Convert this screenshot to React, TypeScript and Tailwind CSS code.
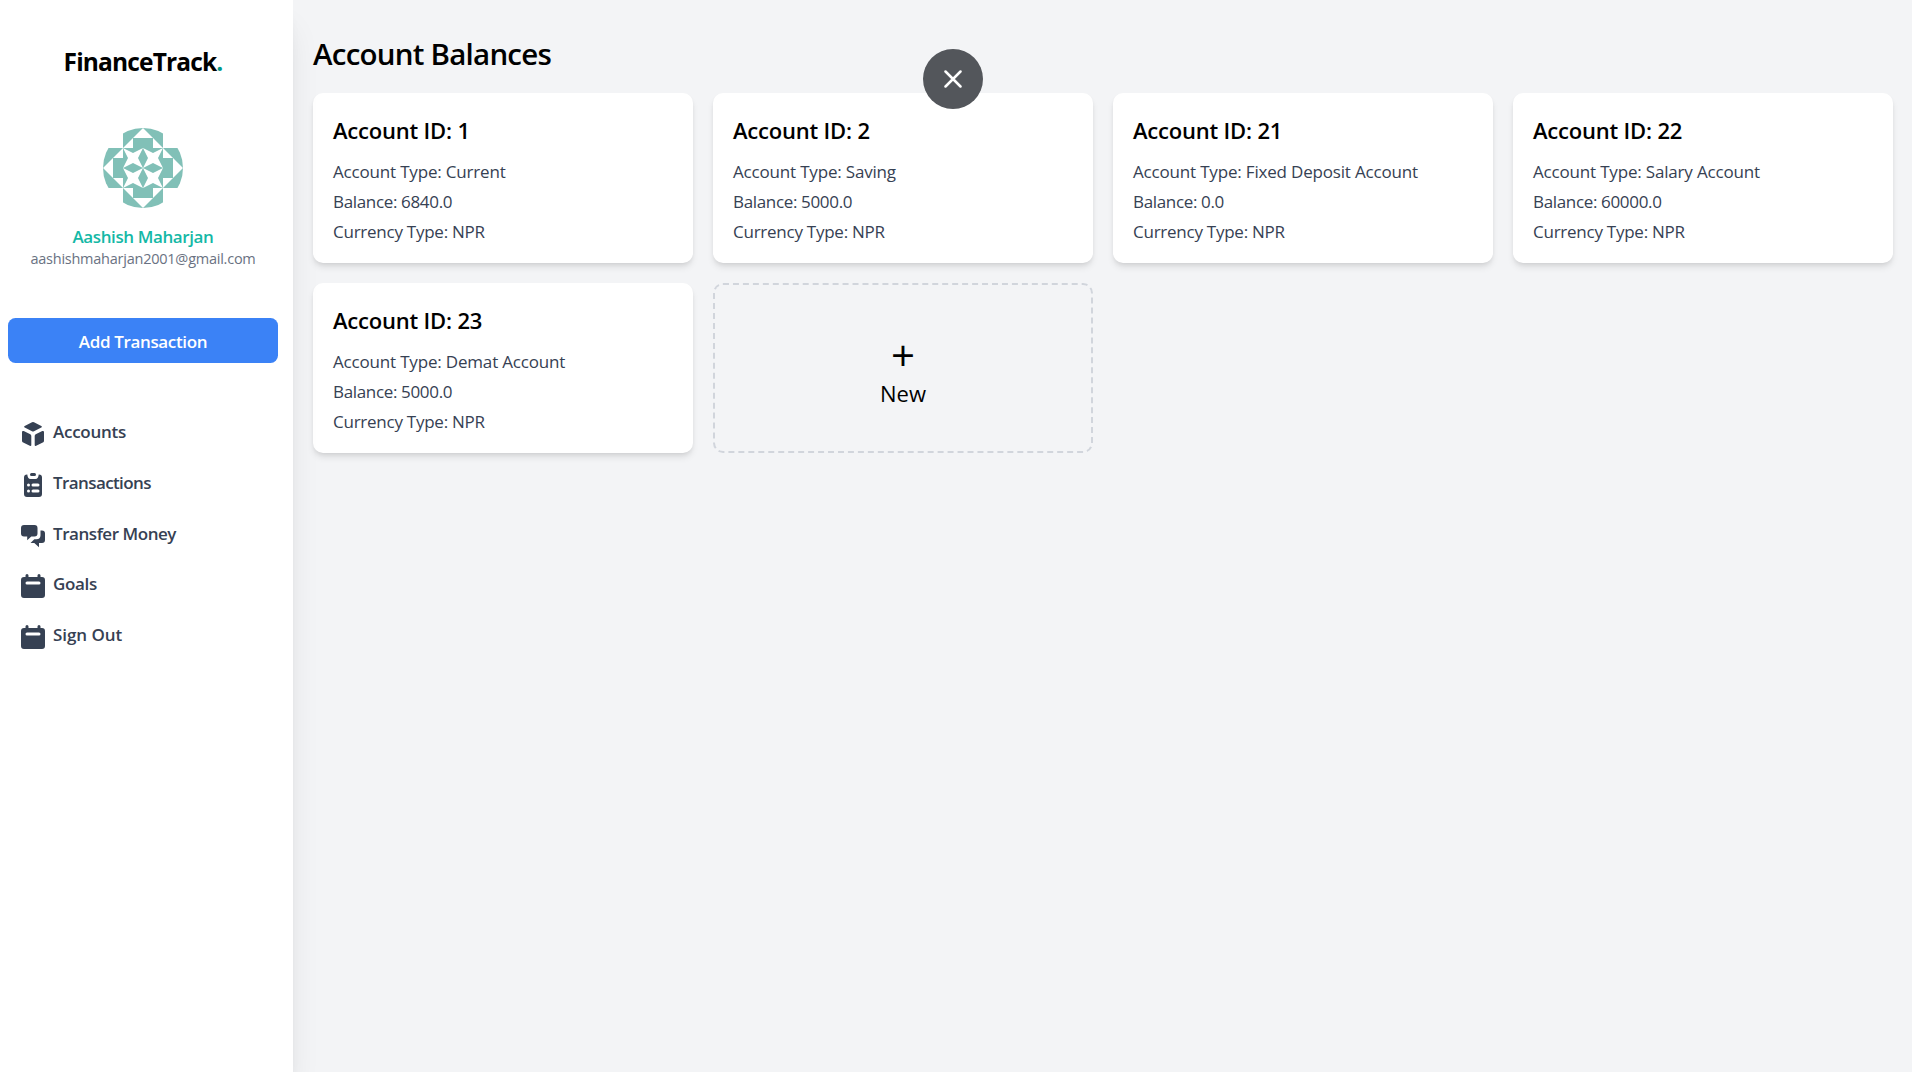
import type { ReactNode } from "react";

type Account = { id: number; type: string; balance: string; currency: string };

const accounts: Account[] = [
  { id: 1, type: "Current", balance: "6840.0", currency: "NPR" },
  { id: 2, type: "Saving", balance: "5000.0", currency: "NPR" },
  { id: 21, type: "Fixed Deposit Account", balance: "0.0", currency: "NPR" },
  { id: 22, type: "Salary Account", balance: "60000.0", currency: "NPR" },
  { id: 23, type: "Demat Account", balance: "5000.0", currency: "NPR" },
];

function Icon({ children }: { children: ReactNode }) {
  return (
    <svg viewBox="0 0 24 24" className="mt-[3px] size-6 shrink-0" fill="currentColor">
      {children}
    </svg>
  );
}

function CubeIcon() {
  return (
    <Icon>
      <path d="M11 .3a2.2 2.2 0 0 1 2 0l7.300 3.700c.7.4.7 1.100 0 1.500L13 9.300a2.200 2.200 0 0 1-2 0L3.700 5.500c-.7-.4-.7-1.100 0-1.500Z" />
      <path d="M2.700 9.100 9.300 12.300a1.800 1.800 0 0 1 1 1.600v9.100c0 .8-.8 1.200-1.500.8L2.200 20.600A2.200 2.200 0 0 1 1 18.700V10.100c0-.9.9-1.400 1.700-1Z" />
      <path d="M21.300 9.100 14.700 12.300a1.800 1.800 0 0 0-1 1.600v9.100c0 .8.8 1.200 1.500.8l6.600-3.200A2.200 2.200 0 0 0 23 18.700V10.100c0-.9-.9-1.400-1.700-1Z" />
    </Icon>
  );
}

function ClipboardIcon() {
  return (
    <Icon>
      <rect x="9" y="0" width="6" height="3" rx="1.5" />
      <path
        fillRule="evenodd"
        d="M6.300 1.500C6.500 4 7.500 6 9.500 6h5c2 0 3-2 3.200-4.500H18a3 3 0 0 1 3 3V21a3 3 0 0 1-3 3H6a3 3 0 0 1-3-3V4.500a3 3 0 0 1 3-3ZM7.500 10.500a1.500 1.500 0 1 0 0 3 1.500 1.500 0 0 0 0-3Zm4.500 0a1.500 1.500 0 0 0 0 3h5a1.500 1.500 0 0 0 0-3Zm-4.500 6a1.500 1.500 0 1 0 0 3 1.500 1.500 0 0 0 0-3Zm4.500 0a1.500 1.500 0 0 0 0 3h5a1.500 1.500 0 0 0 0-3Z"
      />
    </Icon>
  );
}

function ChatIcon() {
  return (
    <Icon>
      <path d="M3 1h10.500a3 3 0 0 1 3 3v5.500a3 3 0 0 1-3 3h-3.200L6.200 16.300V12.500H3a3 3 0 0 1-3-3V4a3 3 0 0 1 3-3Z" />
      <path d="M19.500 6.500H21a3 3 0 0 1 3 3V16a3 3 0 0 1-3 3h-3v4.300L13.300 19H9.500l3.800-3.700h2.200c2.500 0 4-1.500 4-4Z" />
    </Icon>
  );
}

function CalendarIcon() {
  return (
    <Icon>
      <path
        fillRule="evenodd"
        d="M6 0a1.500 1.500 0 0 1 1.500 1.500V3h9V1.500a1.500 1.500 0 0 1 3 0V3H21a3 3 0 0 1 3 3v15a3 3 0 0 1-3 3H3a3 3 0 0 1-3-3V6a3 3 0 0 1 3-3h1.500V1.500A1.500 1.500 0 0 1 6 0Zm0 7.500a1.500 1.500 0 0 0 0 3h12a1.500 1.500 0 0 0 0-3Z"
      />
    </Icon>
  );
}

function Avatar() {
  const star = "M0 0 10 5 20 0 15 10 20 20 10 15 0 20 5 10Z";
  return (
    <svg viewBox="0 0 80 80" className="mt-[49px] size-20 rounded-full">
      <path fill="#81c0b7" d="M20 0h40v20h20v40H60v20H20V60H0V20h20Z" />
      <path fill="#fff" d="M40 0 80 40 40 80 0 40Z" />
      <path fill="#81c0b7" d="M30 10h20v10h10v10h10v20H60v10H50v10H30V60H20V50H10V30h10V20h10Z" />
      <g fill="#fff">
        <path d={star} transform="translate(20 20)" />
        <path d={star} transform="translate(40 20)" />
        <path d={star} transform="translate(20 40)" />
        <path d={star} transform="translate(40 40)" />
      </g>
    </svg>
  );
}

function NavItem({ icon, children, tracking }: { icon: ReactNode; children: string; tracking: string }) {
  return (
    <li className="h-[50.6px]">
      <a href="#" className="flex gap-2 text-[17px] leading-[26px] font-semibold text-gray-700">
        {icon}
        <span className={tracking}>{children}</span>
      </a>
    </li>
  );
}

function Sidebar() {
  return (
    <aside className="relative flex w-[293px] shrink-0 flex-col items-center bg-white pt-11 pr-[15px] pl-2 shadow-[0_25px_31px_-6px_rgb(0_0_0/0.1),0_10px_12.5px_-7.5px_rgb(0_0_0/0.1)]">
      <h1 className="text-[24.5px] leading-[35px] font-bold tracking-[-0.85px] text-black">
        FinanceTrack<span className="text-teal-600">.</span>
      </h1>
      <Avatar />
      <h2 className="mt-4 text-[17px] leading-[25px] font-semibold tracking-[-0.4px] text-[#14b8a6]">
        Aashish Maharjan
      </h2>
      <p className="text-[14.5px] leading-5 tracking-[-0.24px] text-gray-500">
        aashishmaharjan2001@gmail.com
      </p>
      <button className="mt-[49px] h-[45px] w-full rounded-[7.5px] bg-[#3b82f6] pt-[3px] text-[17px] font-semibold tracking-[-0.35px] text-white">
        Add Transaction
      </button>
      <ul className="mt-[56.4px] w-full pl-[13px]">
        <NavItem icon={<CubeIcon />} tracking="tracking-[-0.26px]">Accounts</NavItem>
        <NavItem icon={<ClipboardIcon />} tracking="tracking-[-0.6px]">Transactions</NavItem>
        <NavItem icon={<ChatIcon />} tracking="tracking-[-0.45px]">Transfer Money</NavItem>
        <NavItem icon={<CalendarIcon />} tracking="tracking-[-0.33px]">Goals</NavItem>
        <NavItem icon={<CalendarIcon />} tracking="tracking-[-0.05px]">Sign Out</NavItem>
      </ul>
    </aside>
  );
}

function AccountCard({ account }: { account: Account }) {
  return (
    <div className="h-[170px] rounded-[10px] bg-white p-5 shadow-[0_5px_7.5px_-1px_rgb(0_0_0/0.1),0_2.5px_5px_-2.5px_rgb(0_0_0/0.1)]">
      <h3 className="mb-[9px] text-[22px] leading-[35px] font-semibold tracking-[-0.2px] text-black">
        Account ID: {account.id}
      </h3>
      <div className="text-[17px] leading-[30px] text-gray-700">
        <p className="tracking-[-0.18px]">Account Type: {account.type}</p>
        <p className="tracking-[-0.34px]">Balance: {account.balance}</p>
        <p className="tracking-[-0.25px]">Currency Type: {account.currency}</p>
      </div>
    </div>
  );
}

export default function App() {
  return (
    <div className="flex h-screen overflow-hidden bg-[#f3f4f6] font-['Open_Sans','Noto_Sans',sans-serif]">
      <Sidebar />
      <main className="flex-1 pt-[34px] pr-[19px] pl-5">
        <h2 className="mb-[19px] text-[29.5px] leading-10 font-semibold tracking-[-0.76px] text-black">
          Account Balances
        </h2>
        <div className="grid grid-cols-4 gap-5">
          {accounts.map((account) => (
            <AccountCard key={account.id} account={account} />
          ))}
          <button className="flex h-[170px] flex-col items-center rounded-[10px] border-2 border-dashed border-gray-300 pt-[48px] text-black">
            <span className="text-[42px] leading-[44px]">+</span>
            <span className="mt-px text-[22px] leading-[30px]">New</span>
          </button>
        </div>
      </main>
      <button
        aria-label="Close"
        className="fixed top-[49px] left-[923px] flex size-[60px] items-center justify-center rounded-full bg-[#53565b] text-white"
      >
        <svg viewBox="0 0 18 18" className="size-[18px]" fill="none" stroke="currentColor" strokeWidth="2.5" strokeLinecap="round">
          <path d="M1.500 1.500 16.500 16.500M16.500 1.500 1.500 16.500" />
        </svg>
      </button>
    </div>
  );
}
